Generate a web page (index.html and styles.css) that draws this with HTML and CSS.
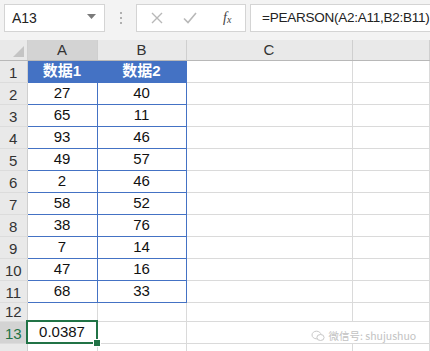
FILE: index.html
```html
<!DOCTYPE html>
<html lang="zh">
<head>
  <meta charset="UTF-8">
  <title>PEARSON</title>
  <link rel="stylesheet" href="styles.css">
</head>
<body>
  <div class="toolbar">
    <div class="name-box">
      <span>A13</span>
      <svg class="caret" width="9" height="5" viewBox="0 0 9 5"><path d="M0 0h9L4.5 5z" fill="#7a7a7a"/></svg>
    </div>
    <div class="dots"><i></i><i></i><i></i></div>
    <div class="fx-box">
      <svg width="12" height="12" viewBox="0 0 12 12"><path d="M1 1l10 10M11 1L1 11" stroke="#b8b8b8" stroke-width="1.4" fill="none"/></svg>
      <svg width="14" height="12" viewBox="0 0 14 12"><path d="M1 6.5l4 4L13 1" stroke="#b8b8b8" stroke-width="1.6" fill="none"/></svg>
      <span class="fx">f<sub>x</sub></span>
    </div>
    <div class="formula">=PEARSON(A2:A11,B2:B11)</div>
  </div>

  <table class="sheet">
    <colgroup>
      <col class="w-row"><col class="w-a"><col class="w-b"><col class="w-c"><col>
    </colgroup>
    <tr class="head">
      <th class="corner"><span class="tri"></span></th>
      <th class="sel-col">A</th>
      <th>B</th>
      <th>C</th>
      <th></th>
    </tr>
    <tr>
      <th>1</th><td class="t-head">数据1</td><td class="t-head">数据2</td><td></td><td></td>
    </tr>
    <tr><th>2</th><td class="t">27</td><td class="t">40</td><td></td><td></td></tr>
    <tr><th>3</th><td class="t">65</td><td class="t">11</td><td></td><td></td></tr>
    <tr><th>4</th><td class="t">93</td><td class="t">46</td><td></td><td></td></tr>
    <tr><th>5</th><td class="t">49</td><td class="t">57</td><td></td><td></td></tr>
    <tr><th>6</th><td class="t">2</td><td class="t">46</td><td></td><td></td></tr>
    <tr><th>7</th><td class="t">58</td><td class="t">52</td><td></td><td></td></tr>
    <tr><th>8</th><td class="t">38</td><td class="t">76</td><td></td><td></td></tr>
    <tr><th>9</th><td class="t">7</td><td class="t">14</td><td></td><td></td></tr>
    <tr><th>10</th><td class="t">47</td><td class="t">16</td><td></td><td></td></tr>
    <tr><th>11</th><td class="t">68</td><td class="t">33</td><td></td><td></td></tr>
    <tr class="short"><th>12</th><td></td><td></td><td></td><td></td></tr>
    <tr>
      <th class="sel-row">13</th><td class="active">0.0387</td><td></td>
      <td colspan="2" class="mark-cell">
        <span class="mark">
          <svg width="14" height="12" viewBox="0 0 14 12"><ellipse cx="5.5" cy="5" rx="4.5" ry="3.8" fill="none" stroke="#c8c8c8"/><ellipse cx="9.5" cy="7.5" rx="3.6" ry="3" fill="#fff" stroke="#c8c8c8"/></svg>
          微信号: shujushuo
        </span>
      </td>
    </tr>
    <tr><th>14</th><td></td><td></td><td></td><td></td></tr>
  </table>
</body>
</html>
```

FILE: styles.css
```css
body {
  margin: 0;
  width: 430px;
  height: 351px;
  overflow: hidden;
  background-color: #fff;
  font-family: 'Liberation Sans', Arial, 'Noto Sans CJK SC', sans-serif;
}

.toolbar {
  height: 40px;
  background-color: #f3f3f3;
  display: flex;
  align-items: flex-start;
  padding-top: 4px;
  box-sizing: border-box;
}

.name-box {
  flex-shrink: 0;
  margin-left: 4px;
  width: 101px;
  height: 28px;
  box-sizing: border-box;
  background-color: #fff;
  border: 1px solid #d4d4d4;
  display: flex;
  align-items: center;
  justify-content: space-between;
  padding: 0 8px 0 7px;
  font-size: 14px;
  color: #222;
}

.name-box .caret {
  margin-top: -3px;
}

.dots {
  flex-shrink: 0;
  width: 31px;
  height: 28px;
  display: flex;
  flex-direction: column;
  align-items: center;
  justify-content: center;
  gap: 3px;
}

.dots i {
  width: 2px;
  height: 2px;
  background-color: #b0b0b0;
}

.fx-box {
  flex-shrink: 0;
  width: 110px;
  height: 28px;
  box-sizing: border-box;
  background-color: #fff;
  border: 1px solid #d4d4d4;
  display: flex;
  align-items: center;
  padding-left: 14px;
  gap: 20px;
}

.fx {
  font-family: 'Liberation Serif', serif;
  font-style: italic;
  font-size: 14px;
  color: #444;
  margin-left: 6px;
}

.fx sub {
  font-size: 10px;
  vertical-align: -1px;
}

.formula {
  margin-left: 4px;
  flex: 1;
  min-width: 0;
  height: 28px;
  box-sizing: border-box;
  background-color: #fff;
  border: 1px solid #d4d4d4;
  border-right: none;
  padding-left: 11px;
  font-size: 13.5px;
  letter-spacing: -0.25px;
  line-height: 26px;
  color: #222;
  white-space: nowrap;
}

.sheet {
  border-collapse: collapse;
  table-layout: fixed;
  width: 430px;
  font-size: 15px;
  color: #111;
}

.w-row { width: 27px; }
.w-a { width: 70px; }
.w-b { width: 89px; }
.w-c { width: 166px; }

.sheet tr {
  height: 22px;
}

.sheet tr.short {
  height: 19px;
}

.sheet tr.head {
  height: 20px;
}

.sheet th {
  background-color: #e9e9e9;
  font-weight: normal;
  color: #333;
  font-size: 15px;
  border-right: 1px solid #cfcfcf;
  border-bottom: 1px solid #dcdcdc;
  padding: 0;
  text-align: center;
  vertical-align: bottom;
  line-height: 18px;
}

.sheet tr.head th {
  border-bottom: 1px solid #b8b8b8;
  vertical-align: middle;
}

.sheet th.sel-col {
  background-color: #d3d3d3;
  border-bottom: 2px solid #217346;
}

.sheet th.sel-row {
  background-color: #d3d3d3;
  color: #217346;
}

.corner {
  position: relative;
}

.tri {
  position: absolute;
  right: 3px;
  bottom: 3px;
  width: 0;
  height: 0;
  border-left: 11px solid transparent;
  border-bottom: 11px solid #c4c4c4;
}

.sheet td {
  border-right: 1px solid #dadada;
  border-bottom: 1px solid #dadada;
  padding: 0;
  text-align: center;
  line-height: 20px;
}

.sheet td.t,
.sheet td.t-head {
  border: 1px solid #4472c4;
}

.sheet td.t-head {
  background-color: #4472c4;
  color: #fff;
  font-weight: bold;
  font-family: 'Liberation Sans', 'Noto Sans CJK SC', sans-serif;
}

.sheet td.active {
  position: relative;
  outline: 2px solid #217346;
  outline-offset: -1px;
}

.sheet td.active::after {
  content: "";
  position: absolute;
  right: -4px;
  bottom: -4px;
  width: 6px;
  height: 6px;
  background-color: #217346;
  border: 1px solid #fff;
}

.mark-cell {
  text-align: left;
  position: relative;
}

.mark {
  position: absolute;
  left: 124px;
  top: 4px;
  display: flex;
  align-items: center;
  gap: 4px;
  font-size: 10.5px;
  color: #c2c2c2;
  white-space: nowrap;
  font-family: 'Noto Sans CJK SC', sans-serif;
}
```
